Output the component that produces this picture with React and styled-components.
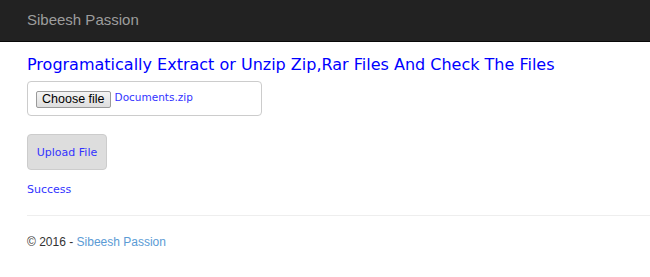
import React from "react";
import styled, { createGlobalStyle } from "styled-components";

const GlobalStyle = createGlobalStyle`
  html, body {
    margin: 0;
    padding: 0;
    background: #ffffff;
    font-family: "Liberation Sans", Arial, sans-serif;
  }
`;

const comic = `"Comic Sans MS", "DejaVu Sans", sans-serif`;

function App() {
  return (
    <>
      <GlobalStyle />
      <Navbar>
        <Brand>Sibeesh Passion</Brand>
      </Navbar>
      <Body>
        <Title>Programatically Extract or Unzip Zip,Rar Files And Check The Files</Title>
        <FileBox>
          <ChooseButton>Choose file</ChooseButton>
          <FileName>Documents.zip</FileName>
        </FileBox>
        <UploadButton>Upload File</UploadButton>
        <Status>Success</Status>
        <Divider />
        <Footer>
          © 2016 - <FooterLink href="#">Sibeesh Passion</FooterLink>
        </Footer>
      </Body>
    </>
  );
}

const Navbar = styled.div`
  height: 41px;
  background: #222222;
  border-bottom: 1px solid #080808;
  display: flex;
  align-items: center;
  padding-left: 27px;
`;

const Brand = styled.div`
  color: #9d9d9d;
  font-size: 15px;
  line-height: 20px;
  margin-top: -1px;
`;

const Body = styled.div`
  padding: 12px 0 0 27px;
`;

const Title = styled.h2`
  margin: 0;
  font-family: ${comic};
  font-weight: normal;
  font-size: 16px;
  line-height: 22px;
  color: #0000ff;
  white-space: nowrap;
`;

const FileBox = styled.div`
  margin-top: 5px;
  width: 225px;
  height: 33px;
  border: 1px solid #cccccc;
  border-radius: 4px;
  display: flex;
  align-items: center;
  padding-left: 8px;
  gap: 4px;
`;

const ChooseButton = styled.div`
  box-sizing: border-box;
  height: 17px;
  padding: 0 5px;
  border: 1px solid #9a9a9a;
  border-radius: 2px;
  background: linear-gradient(#f4f4f4, #dedede);
  color: #000;
  font-size: 12.5px;
  line-height: 15px;
  margin-top: 1px;
`;

const FileName = styled.span`
  font-family: ${comic};
  font-size: 10.5px;
  color: #3333ff;
  margin-top: -4px;
`;

const UploadButton = styled.button`
  display: block;
  margin-top: 18px;
  width: 80px;
  height: 36px;
  background: #dddddd;
  border: 1px solid #cccccc;
  border-radius: 4px;
  font-family: ${comic};
  font-size: 11px;
  color: #3333ff;
  padding: 0;
`;

const Status = styled.div`
  margin-top: 13px;
  font-family: ${comic};
  font-size: 11px;
  line-height: 14px;
  color: #3333ff;
`;

const Divider = styled.hr`
  margin: 18px 0 0;
  border: 0;
  border-top: 1px solid #eeeeee;
`;

const Footer = styled.div`
  margin-top: 17px;
  font-size: 12px;
  line-height: 18px;
  color: #333333;
`;

const FooterLink = styled.a`
  color: #5b9bd5;
  text-decoration: none;
`;

export default App;
